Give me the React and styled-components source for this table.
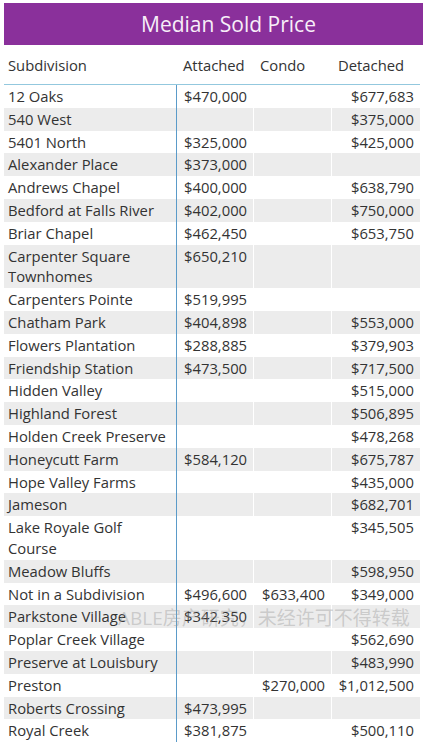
import React from 'react';
import styled, { createGlobalStyle } from 'styled-components';

const rows = [
  ['12 Oaks', '$470,000', '', '$677,683'],
  ['540 West', '', '', '$375,000'],
  ['5401 North', '$325,000', '', '$425,000'],
  ['Alexander Place', '$373,000', '', ''],
  ['Andrews Chapel', '$400,000', '', '$638,790'],
  ['Bedford at Falls River', '$402,000', '', '$750,000'],
  ['Briar Chapel', '$462,450', '', '$653,750'],
  ['Carpenter Square Townhomes', '$650,210', '', ''],
  ['Carpenters Pointe', '$519,995', '', ''],
  ['Chatham Park', '$404,898', '', '$553,000'],
  ['Flowers Plantation', '$288,885', '', '$379,903'],
  ['Friendship Station', '$473,500', '', '$717,500'],
  ['Hidden Valley', '', '', '$515,000'],
  ['Highland Forest', '', '', '$506,895'],
  ['Holden Creek Preserve', '', '', '$478,268'],
  ['Honeycutt Farm', '$584,120', '', '$675,787'],
  ['Hope Valley Farms', '', '', '$435,000'],
  ['Jameson', '', '', '$682,701'],
  ['Lake Royale Golf Course', '', '', '$345,505'],
  ['Meadow Bluffs', '', '', '$598,950'],
  ['Not in a Subdivision', '$496,600', '$633,400', '$349,000'],
  ['Parkstone Village', '$342,350', '', ''],
  ['Poplar Creek Village', '', '', '$562,690'],
  ['Preserve at Louisbury', '', '', '$483,990'],
  ['Preston', '', '$270,000', '$1,012,500'],
  ['Roberts Crossing', '$473,995', '', ''],
  ['Royal Creek', '$381,875', '', '$500,110'],
];

const App = () => {
  return (
    <>
      <GlobalStyle />
      <Page>
        <TitleBar>Median Sold Price</TitleBar>
        <Table>
          <HeadRow>
            <HeadCell>Subdivision</HeadCell>
            <HeadCell $pad="7px">Attached</HeadCell>
            <HeadCell $pad="7px">Condo</HeadCell>
            <HeadCell $pad="7px">Detached</HeadCell>
          </HeadRow>
          {rows.map((r, i) => (
            <Row key={r[0]} $shaded={i % 2 === 1}>
              <NameCell>{r[0]}</NameCell>
              <AttachedCell>{r[1]}</AttachedCell>
              <CondoCell>{r[2]}</CondoCell>
              <DetachedCell>{r[3]}</DetachedCell>
            </Row>
          ))}
          <Watermark>ABLE房产研究，未经许可不得转载</Watermark>
        </Table>
      </Page>
    </>
  );
};

const GlobalStyle = createGlobalStyle`
  body {
    margin: 0;
    background: #fff;
    font-family: "Open Sans", "Noto Sans CJK SC", sans-serif;
  }
`;

const Page = styled.div`
  width: 427px;
  padding-top: 3px;
  box-sizing: border-box;
`;

const TitleBar = styled.div`
  margin: 0 4px;
  height: 42px;
  padding-left: 30px;
  box-sizing: border-box;
  background: #8a309b;
  color: #f7eef8;
  font-size: 21px;
  display: flex;
  align-items: center;
  justify-content: center;
`;

const Table = styled.div`
  position: relative;
  margin-left: 4px;
  width: 416px;
  color: #333;
  font-size: 14.8px;
`;

const HeadRow = styled.div`
  display: grid;
  grid-template-columns: 172px 77px 78px 89px;
  height: 39px;
  align-items: center;
  border-bottom: 1px solid #93c8de;
`;

const HeadCell = styled.div`
  padding-left: ${p => p.$pad || '4px'};
`;

const Row = styled.div`
  display: grid;
  grid-template-columns: 172px 77px 78px 89px;
  background: ${p => (p.$shaded ? '#ececec' : '#fff')};
  line-height: 20.8px;
`;

const Cell = styled.div`
  padding: 1px 0;
  white-space: nowrap;
`;

const NameCell = styled(Cell)`
  padding-left: 4px;
  padding-right: 6px;
  white-space: normal;
`;

const AttachedCell = styled(Cell)`
  border-left: 1px solid #5b9bc9;
  padding-left: 7px;
`;

const CondoCell = styled(Cell)`
  border-left: 1px solid #fff;
  padding-left: 8px;
`;

const DetachedCell = styled(Cell)`
  border-left: 1px solid #fff;
  text-align: right;
  padding-right: 6px;
`;

const Watermark = styled.div`
  position: absolute;
  left: 114px;
  top: 558px;
  font-size: 19px;
  color: rgba(150, 150, 150, 0.4);
  white-space: nowrap;
  pointer-events: none;
`;

export default App;
